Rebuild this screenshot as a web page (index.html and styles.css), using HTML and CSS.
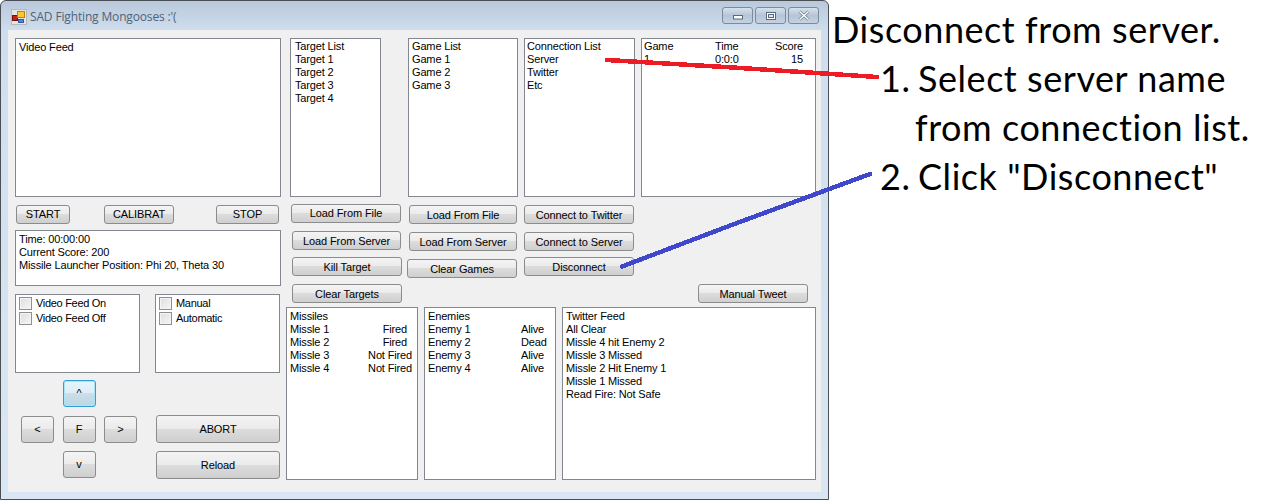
FILE: index.html
```html
<!DOCTYPE html>
<html lang="en">
<head>
<meta charset="utf-8">
<title>SAD Fighting Mongooses</title>
<link rel="stylesheet" href="styles.css">
</head>
<body>
<div class="page">
  <div class="window">
    <div class="titlebar">
      <svg class="app-icon" width="16" height="16" viewBox="0 0 16 16"><rect x="0.5" y="0.5" width="15" height="15" fill="#e4e4e4" stroke="#b8b8b8"/><rect x="1.5" y="6.5" width="5" height="5" fill="#c22018" stroke="#7a100c"/><rect x="6.5" y="2.5" width="7" height="6" fill="#f6c834" stroke="#b8860b"/><rect x="7.5" y="10.5" width="5" height="3" fill="#4a86dc" stroke="#2a5aa8"/></svg>
      <span class="title">SAD Fighting Mongooses :'(</span>
      <div class="caption-btns">
        <div class="cap"><svg width="12" height="8" viewBox="0 0 12 8"><rect x="1.5" y="3.5" width="9" height="3.5" fill="#fff" stroke="#596a80"/></svg></div>
        <div class="cap"><svg width="12" height="10" viewBox="0 0 12 10"><rect x="1.5" y="1.5" width="9" height="7" fill="#fff" stroke="#596a80"/><rect x="3.5" y="3.5" width="5" height="3" fill="#dfe7f0" stroke="#596a80"/></svg></div>
        <div class="cap"><svg width="14" height="11" viewBox="0 0 14 11"><path d="M2.5 1.5 L11.5 9.5 M11.5 1.5 L2.5 9.5" stroke="#6a7a8e" stroke-width="3"/><path d="M2.5 1.5 L11.5 9.5 M11.5 1.5 L2.5 9.5" stroke="#fff" stroke-width="1.4"/></svg></div>
      </div>
    </div>
    <div class="client">
      <div class="left">
        <div class="box video"><div>Video Feed</div></div>
        <div class="cmd-row">
          <button class="btn b-start">START</button>
          <button class="btn b-cal">CALIBRAT</button>
          <button class="btn b-stop">STOP</button>
        </div>
        <div class="box status">
          <div>Time: 00:00:00</div>
          <div>Current Score: 200</div>
          <div>Missile Launcher Position: Phi 20, Theta 30</div>
        </div>
        <div class="checks">
          <div class="box check-box">
            <label class="check"><span class="tick"></span>Video Feed On</label>
            <label class="check"><span class="tick"></span>Video Feed Off</label>
          </div>
          <div class="box check-box">
            <label class="check"><span class="tick"></span>Manual</label>
            <label class="check"><span class="tick"></span>Automatic</label>
          </div>
        </div>
        <div class="controls">
          <div class="pad">
            <button class="btn pad-btn focus pad-up">^</button>
            <button class="btn pad-btn pad-left">&lt;</button>
            <button class="btn pad-btn pad-fire">F</button>
            <button class="btn pad-btn pad-right">&gt;</button>
            <button class="btn pad-btn pad-down">v</button>
          </div>
          <div class="actions">
            <button class="btn big">ABORT</button>
            <button class="btn big">Reload</button>
          </div>
        </div>
      </div>
      <div class="right">
        <div class="lists">
          <div class="box l-target">
            <div>Target List</div><div>Target 1</div><div>Target 2</div><div>Target 3</div><div>Target 4</div>
          </div>
          <div class="box l-game">
            <div>Game List</div><div>Game 1</div><div>Game 2</div><div>Game 3</div>
          </div>
          <div class="box l-conn">
            <div>Connection List</div><div>Server</div><div>Twitter</div><div>Etc</div>
          </div>
          <div class="box l-score">
            <div class="score-row"><span class="c-game">Game</span><span class="c-time">Time</span><span class="c-score">Score</span></div>
            <div class="score-row"><span class="c-game">1</span><span class="c-time">0:0:0</span><span class="c-score">15</span></div>
          </div>
        </div>
        <div class="btn-area">
          <div class="col col1">
            <button class="btn w110 top">Load From File</button>
            <button class="btn w109 n1 s8">Load From Server</button>
            <button class="btn w110 n1 s7">Kill Target</button>
            <button class="btn w110 n1 s8">Clear Targets</button>
          </div>
          <div class="col col2">
            <button class="btn w108 n2">Load From File</button>
            <button class="btn w108 n2 s8">Load From Server</button>
            <button class="btn w110 s8">Clear Games</button>
          </div>
          <div class="col col3">
            <button class="btn w110">Connect to Twitter</button>
            <button class="btn w110 s8">Connect to Server</button>
            <button class="btn w110 s6">Disconnect</button>
          </div>
          <div class="col col4">
            <button class="btn w110">Manual Tweet</button>
          </div>
        </div>
        <div class="lower">
          <div class="box l-missiles">
            <div>Missiles</div>
            <div class="kv"><span>Missle 1</span><span class="v-m">Fired</span></div>
            <div class="kv"><span>Missle 2</span><span class="v-m">Fired</span></div>
            <div class="kv"><span>Missle 3</span><span class="v-n">Not Fired</span></div>
            <div class="kv"><span>Missle 4</span><span class="v-n">Not Fired</span></div>
          </div>
          <div class="box l-enemies">
            <div>Enemies</div>
            <div class="kv"><span>Enemy 1</span><span class="v-e">Alive</span></div>
            <div class="kv"><span>Enemy 2</span><span class="v-e">Dead</span></div>
            <div class="kv"><span>Enemy 3</span><span class="v-e">Alive</span></div>
            <div class="kv"><span>Enemy 4</span><span class="v-e">Alive</span></div>
          </div>
          <div class="box l-twitter">
            <div>Twitter Feed</div><div>All Clear</div><div>Missle 4 hit Enemy 2</div><div>Missle 3 Missed</div><div>Missle 2 Hit Enemy 1</div><div>Missle 1 Missed</div><div>Read Fire: Not Safe</div>
          </div>
        </div>
      </div>
    </div>
  </div>
  <div class="notes">
    <div class="note-title">Disconnect from server.</div>
    <div class="step"><span class="num">1.</span><span>Select server name</span></div>
    <div class="step step-cont">from connection list.</div>
    <div class="step"><span class="num">2.</span><span>Click "Disconnect"</span></div>
  </div>
  <svg class="arrows" width="1262" height="500" viewBox="0 0 1262 500">
    <path d="M607 60 L733 67.500 L877 77" fill="none" stroke="#ed1c24" stroke-width="4.5" stroke-linecap="round" shape-rendering="crispEdges"/>
    <path d="M622 266.500 L733 224.500 L870 174" fill="none" stroke="#3f48cc" stroke-width="4.5" stroke-linecap="round" shape-rendering="crispEdges"/>
  </svg>
</div>
</body>
</html>
```
FILE: styles.css
```css
* { box-sizing: border-box; }
html, body { margin: 0; padding: 0; background: #fff; }
body { width: 1262px; height: 500px; overflow: hidden; }
.page { position: relative; display: flex; width: 1262px; height: 500px; }

.window {
  width: 829px; height: 500px; flex: none;
  border: 1px solid #4a4f55; border-radius: 6px 6px 0 0;
  background: linear-gradient(180deg, #b9c9db 0, #cfdeee 30px, #dae6f3 100%);
  padding: 0 7px 7px;
  display: flex; flex-direction: column;
}
.titlebar { height: 29px; flex: none; display: flex; align-items: center; padding: 2px 0 0 3px; }
.app-icon { flex: none; }
.title { font: 12px "Open Sans", sans-serif; letter-spacing: -0.15px; color: #4f6378; margin-left: 3px; }
.caption-btns { margin-left: auto; display: flex; gap: 2px; margin-top: -2px; margin-right: 2px; }
.cap { width: 31px; height: 17px; border: 1px solid #7b8a9c; border-radius: 3px; background: linear-gradient(180deg, #d6e1ec, #b6c5d6 50%, #c4d2e1); display: flex; align-items: center; justify-content: center; }

.client { flex: 1; background: #f0f0f0; display: flex; padding: 8px 5px 0 7px; font: 11px/13px "Liberation Sans", sans-serif; letter-spacing: -0.15px; color: #000; }
.left { width: 266px; flex: none; display: flex; flex-direction: column; }
.right { width: 530px; margin-left: 5px; flex: none; display: flex; flex-direction: column; }

.box { background: #fff; border: 1px solid #828790; padding: 2px 3px; flex: none; }
.btn {
  display: block; height: 19px; padding: 1px 0 0; flex: none;
  font: 11px/15px "Liberation Sans", sans-serif; letter-spacing: -0.1px; color: #000;
  border: 1px solid #8c8c8c; border-radius: 3px;
  background: linear-gradient(180deg, #f4f4f4 0, #ebebeb 48%, #dcdcdc 50%, #cfcfcf 100%);
}
.top { padding-top: 0; }

.video { height: 159px; }
.cmd-row { display: flex; margin-top: 8px; padding-left: 1px; }
.cmd-row .btn { padding-top: 0; }
.b-start { width: 54px; }
.b-cal { width: 70px; margin-left: 34px; }
.b-stop { width: 63px; margin-left: 42px; }
.status { height: 56px; margin-top: 6px; }
.checks { display: flex; gap: 15px; margin-top: 8px; }
.check-box { width: 125px; height: 79px; padding: 1px 0 0 2px; }
.check { display: flex; align-items: center; height: 15px; letter-spacing: -0.3px; }
.tick { width: 13px; height: 13px; margin-left: 1px; margin-right: 4px; border: 1px solid #8e8f8f; background: linear-gradient(135deg, #dedede, #f6f6f6); box-shadow: inset 0 0 0 1px #f4f4f4; }

.controls { display: flex; margin-top: 7px; padding-left: 6px; }
.pad { display: grid; grid-template-columns: 33px 33px 33px; grid-template-rows: 27px 27px 27px; column-gap: 8.5px; row-gap: 8.5px; }
.pad-btn { width: 33px; height: 27px; padding-top: 0; }
.pad-up { grid-column: 2; grid-row: 1; }
.pad-left { grid-column: 1; grid-row: 2; }
.pad-fire { grid-column: 2; grid-row: 2; }
.pad-right { grid-column: 3; grid-row: 2; }
.pad-down { grid-column: 2; grid-row: 3; }
.focus { border: 1px solid #2f9fdc; box-shadow: inset 0 0 0 1px #a8e4fa; background: linear-gradient(180deg, #e6f4fb 0, #dfeef6 48%, #c9dfea 50%, #bcd6e3 100%); }
.actions { margin-left: 19px; padding-top: 35px; display: flex; flex-direction: column; gap: 8px; }
.big { width: 124px; height: 28px; padding-top: 0; }

.lists { display: flex; padding-left: 4px; }
.lists .box { height: 159px; padding-top: 1px; }
.l-target { width: 91px; }
.lists .l-target { padding-left: 4px; }
.l-game { width: 110px; margin-left: 27px; }
.l-conn { width: 111px; margin-left: 6px; }
.lists .l-conn, .lists .l-score { padding-left: 2px; }
.l-score { width: 175px; margin-left: 6px; }
.score-row { display: flex; }
.c-game { width: 71px; }
.c-time { width: 60px; }
.c-score { width: 28px; text-align: right; }

.btn-area { display: flex; height: 106px; }
.col { display: flex; flex-direction: column; flex: none; }
.col1 { margin-left: 5px; padding-top: 7px; width: 111px; }
.col2 { margin-left: 5px; padding-top: 8px; width: 110px; }
.col3 { margin-left: 7px; padding-top: 8px; width: 110px; }
.col4 { margin-left: 64px; padding-top: 87px; width: 110px; }
.w108 { width: 108px; } .w109 { width: 109px; } .w110 { width: 110px; }
.n1 { margin-left: 1px; } .n2 { margin-left: 2px; }
.s6 { margin-top: 6px; } .s7 { margin-top: 7px; } .s8 { margin-top: 8px; }

.lower { display: flex; gap: 6px; margin-top: 4px; }
.lower .box { height: 173px; }
.l-missiles, .l-enemies { width: 132px; }
.l-twitter { width: 254px; }
.kv { display: flex; justify-content: space-between; }
.v-m { margin-right: 7px; }
.v-n { margin-right: 2px; }
.v-e { width: 31px; }

.notes { flex: 1; padding: 5px 0 0 3px; font: 36px/49px "Lato", "Open Sans", sans-serif; letter-spacing: 0.55px; font-variant-ligatures: none; color: #000; white-space: nowrap; }
.step { display: flex; padding-left: 48px; }
.num { width: 38px; flex: none; }
.step-cont { padding-left: 83px; }
.arrows { position: absolute; left: 0; top: 0; pointer-events: none; }
```
